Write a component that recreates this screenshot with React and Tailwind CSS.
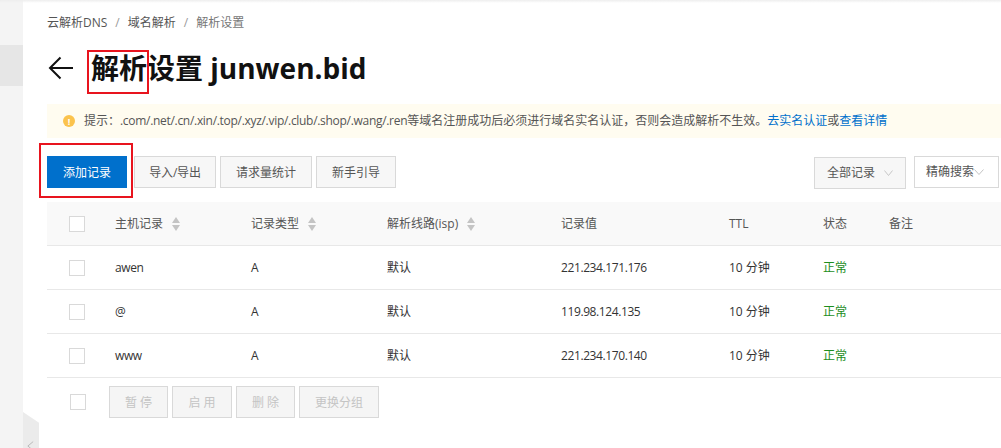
import React from 'react';

const rows = [
  { host: 'awen', ip: '221.234.171.176' },
  { host: '@', ip: '119.98.124.135' },
  { host: 'www', ip: '221.234.170.140' },
];

const gridCols = 'grid grid-cols-[68px_136px_136px_174px_168px_94px_66px_1fr] items-center';

function Box() {
  return <span className="block w-4 h-4 border border-[#d9d9d9] bg-white"></span>;
}

function Sort() {
  return (
    <svg width="8" height="14" viewBox="0 0 8 14" className="ml-[9px]">
      <path d="M4 0L8 6H0z" fill="#c4c4c4" />
      <path d="M4 14L0 8h8z" fill="#c4c4c4" />
    </svg>
  );
}

function Chevron({ w = 10 }) {
  return (
    <svg width={w} height="6" viewBox="0 0 10 6" preserveAspectRatio="none" fill="none" stroke="#c4c4c4" strokeWidth="1">
      <path d="M.5.5L5 5.5 9.5.5" />
    </svg>
  );
}

function Btn({ w, children }) {
  return (
    <button className={`${w} h-8 pt-px border border-[#d9d9d9] bg-[#f7f7f7] text-[#555] text-xs`}>{children}</button>
  );
}

function OffBtn({ w, children }) {
  return (
    <button className={`${w} h-8 pt-px border border-[#d9d9d9] bg-[#f5f5f5] text-[#c4c4c4] text-xs`}>{children}</button>
  );
}

export default function App() {
  return (
    <div className="relative flex w-[1001px] h-[448px] overflow-hidden bg-white text-xs text-[#333] font-['Open_Sans','Noto_Sans_CJK_SC',sans-serif]">
      {/* Sidebar strip */}
      <aside className="w-[23px] shrink-0 bg-[#f4f4f4] pt-[45px]">
        <div className="h-[41px] bg-[#e6e6e6]"></div>
      </aside>

      {/* Main */}
      <main className="flex-1 min-w-0 pl-6 pt-[15px]">
        <nav className="flex items-center h-[15px] leading-[15px] text-[#555]">
          <span>云解析DNS</span>
          <span className="mx-2 text-[#999]">/</span>
          <span>域名解析</span>
          <span className="mx-2 text-[#999]">/</span>
          <span className="text-[#777]">解析设置</span>
        </nav>

        <div className="flex items-center h-9 mt-[20px]">
          <svg width="26" height="24" viewBox="0 0 26 24" fill="none" stroke="#111" strokeWidth="2" className="ml-px">
            <path d="M25 12H2M12.5 1.5L2 12l10.5 10.5" />
          </svg>
          <h1 className="ml-[17px] text-[28px] leading-9 font-bold text-[#111] whitespace-nowrap">解析设置 junwen.bid</h1>
        </div>

        <div className="flex items-center h-[34px] mt-[18px] pl-4 bg-[#fffcf0] text-[#555] whitespace-nowrap">
          <span className="flex items-center justify-center w-3 h-3 rounded-full bg-[#fbc34d] text-white text-[9px] font-bold leading-none">!</span>
          <span className="ml-[9px]">
            提示：<span className="tracking-[-0.3px]">.com/.net/.cn/.xin/.top/.xyz/.vip/.club/.shop/.wang/.ren</span>等域名注册成功后必须进行域名实名认证，否则会造成解析不生效。
            <span className="text-[#0070cc]">去实名认证</span>或<span className="text-[#0070cc]">查看详情</span>
          </span>
        </div>

        {/* Toolbar */}
        <div className="flex items-center h-8 mt-[18px]">
          <button className="w-20 h-8 pt-px bg-[#0070cc] text-white text-xs">添加记录</button>
          <div className="ml-[7px] flex gap-1">
            <Btn w="w-[82px] tracking-[-0.2px]">导入/导出</Btn>
            <Btn w="w-[92px]">请求量统计</Btn>
            <Btn w="w-20">新手引导</Btn>
          </div>
          <button className="ml-[418px] mt-0.5 flex items-center w-[92px] h-8 pl-3 border border-[#d9d9d9] bg-[#f7f7f7] text-[#555]">
            全部记录<span className="ml-[9px]"><Chevron w={9} /></span>
          </button>
          <button className="ml-2 flex items-center w-[85px] h-8 pl-[11px] border border-[#d9d9d9] bg-white text-[#555]">
            精确搜索<Chevron />
          </button>
        </div>

        {/* Table */}
        <div className="mt-[14px] text-[#555]">
          <div className={`${gridCols} h-11 bg-[#f9f9f9] border-b border-[#e8e8e8]`}>
            <span className="pl-[22px]"><Box /></span>
            <span className="flex items-center">主机记录<Sort /></span>
            <span className="flex items-center">记录类型<Sort /></span>
            <span className="flex items-center">解析线路(isp)<Sort /></span>
            <span>记录值</span>
            <span>TTL</span>
            <span>状态</span>
            <span>备注</span>
          </div>
          {rows.map((r) => (
            <div key={r.host} className={`${gridCols} h-11 border-b border-[#e8e8e8] text-[#333]`}>
              <span className="pl-[22px]"><Box /></span>
              <span className="tracking-[-0.4px]">{r.host}</span>
              <span>A</span>
              <span>默认</span>
              <span className="tracking-[-0.4px]">{r.ip}</span>
              <span>10 分钟</span>
              <span className="text-[#1e8e1e]">正常</span>
              <span></span>
            </div>
          ))}
          <div className="flex items-center h-8 mt-2 pl-[23px]">
            <Box />
            <div className="ml-[23px] flex gap-1">
              <OffBtn w="w-[59px]">暂 停</OffBtn>
              <OffBtn w="w-[60px]">启 用</OffBtn>
              <OffBtn w="w-[59px]">删 除</OffBtn>
              <OffBtn w="w-20">更换分组</OffBtn>
            </div>
          </div>
        </div>
      </main>

      {/* Top edge shadow */}
      <div className="absolute top-0 left-0 right-0 h-[3px] bg-gradient-to-b from-[#eeeeee] to-transparent"></div>

      {/* Sidebar collapse handle */}
      <div className="absolute left-[23px] top-[412px] w-4 h-9 bg-[#ebebeb] [clip-path:polygon(0_0,100%_30%,100%_100%,0_100%)] pt-7 pl-1">
        <svg width="7" height="12" viewBox="0 0 8 12" fill="none" stroke="#b5b5b5" strokeWidth="1">
          <path d="M7 1L1 6l6 5" />
        </svg>
      </div>

      {/* Red annotation boxes */}
      <div className="absolute left-[87px] top-[50px] w-[62px] h-[44px] border-2 border-[#e8141e]"></div>
      <div className="absolute left-[39px] top-[143px] w-[94px] h-[55px] border-2 border-[#e8141e]"></div>
    </div>
  );
}
